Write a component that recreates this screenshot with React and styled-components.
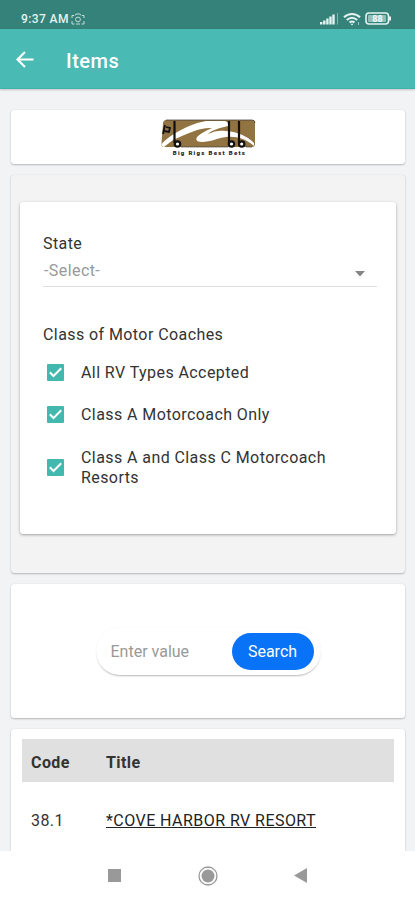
import React from "react"
import styled, { createGlobalStyle } from "styled-components"

const GlobalStyle = createGlobalStyle`
  * {
    box-sizing: border-box;
  }
  body {
    margin: 0;
    background: #f1f3f5;
    color: #333;
    font-family: Roboto, "Liberation Sans", sans-serif;
    font-size: 16px;
    letter-spacing: 0.42px;
  }
`

const Screen = styled.div`
  display: flex;
  flex-direction: column;
  width: 415px;
  height: 900px;
  overflow: hidden;
`

const StatusBar = styled.div`
  display: flex;
  flex: 0 0 29px;
  align-items: center;
  justify-content: space-between;
  padding: 8px 23px 0 21px;
  background-color: #348279;
  color: #e4f3f1;
  font-size: 12px;
  font-weight: 500;
  letter-spacing: 0.4px;
  svg {
    display: block;
  }
`

const StatusGroup = styled.div`
  display: flex;
  align-items: center;
  gap: ${props => props.$gap}px;
`

const TopBar = styled.header`
  display: flex;
  flex: 0 0 60px;
  align-items: center;
  padding: 2px 16px 0;
  background-color: #49bab4;
  border-bottom: 1px solid #3cb5a8;
  box-shadow: 0 1px 2px rgba(0, 0, 0, 0.2);
  h1 {
    margin: 2px 0 0 32px;
    color: #fff;
    font-size: 20px;
    font-weight: 500;
    letter-spacing: 0.5px;
  }
`

const Content = styled.main`
  display: flex;
  flex: 1;
  flex-direction: column;
  min-height: 0;
  padding: 21px 10px 0 11px;
  overflow: hidden;
`

const Card = styled.section`
  flex: 0 0 ${props => props.$height}px;
  margin-bottom: ${props => props.$gap || 11}px;
  background-color: ${props => props.$color || "#fff"};
  border-radius: 3px;
  box-shadow: 0 1px 2px rgba(0, 0, 0, 0.24), 0 0 1px rgba(0, 0, 0, 0.12);
`

const LogoCard = styled(Card)`
  display: flex;
  justify-content: center;
  padding-top: 9px;
`

const FilterCard = styled(Card)`
  padding: 27px 9px 0;
`

const FilterPanel = styled.div`
  height: 332px;
  padding: 32px 19px 0 23px;
  background-color: #fff;
  border-radius: 3px;
  box-shadow: 0 1px 3px rgba(0, 0, 0, 0.34);
`

const Label = styled.div`
  line-height: 20px;
`

const Select = styled.div`
  display: flex;
  align-items: center;
  justify-content: space-between;
  height: 33px;
  margin-bottom: 38px;
  padding: 0 12px 0 1px;
  border-bottom: 1px solid #dedede;
  color: #999;
  svg {
    margin-top: 7px;
  }
`

const Option = styled.div`
  display: flex;
  align-items: center;
  min-height: 42px;
  margin-top: ${props => props.$top || 0}px;
  padding: 0 30px 0 4px;
  line-height: 20px;
  svg {
    flex: 0 0 17px;
    margin: -2px 17px 0 0;
  }
`

const SearchCard = styled(Card)`
  display: flex;
  align-items: flex-start;
  justify-content: center;
  padding-top: 43px;
`

const SearchBox = styled.div`
  display: flex;
  align-items: center;
  justify-content: space-between;
  width: 225px;
  height: 48px;
  padding: 0 7px 0 15px;
  border-radius: 24px;
  color: #999;
  letter-spacing: 0;
  box-shadow: 0 2px 2px -1px rgba(0, 0, 0, 0.28), 0 0 1px rgba(0, 0, 0, 0.08);
`

const SearchButton = styled.button`
  width: 82px;
  height: 37px;
  padding: 0;
  border: 0;
  border-radius: 19px;
  background-color: #0873f7;
  color: #fff;
  font: 400 16px Roboto, sans-serif;
  letter-spacing: 0;
`

const TableCard = styled(Card)`
  padding: 10px 11px 0;
`

const Row = styled.div`
  display: grid;
  grid-template-columns: 75px 1fr;
  align-items: center;
  height: ${props => (props.$head ? 43 : 76)}px;
  padding: ${props => (props.$head ? 3 : 0)}px 0 0 9px;
  background-color: ${props => (props.$head ? "#e0e0e0" : "transparent")};
  font-weight: ${props => (props.$head ? 700 : 400)};
`

const TitleLink = styled.a`
  color: #222;
  letter-spacing: 0.45px;
  text-decoration: underline;
  text-decoration-thickness: 1px;
`

const NavBar = styled.nav`
  display: flex;
  flex: 0 0 49px;
  align-items: center;
  justify-content: space-between;
  padding: 0 108px 0 108px;
  background-color: #fff;
  svg {
    display: block;
  }
`

const CameraIcon = () => (
  <svg width="14" height="12" viewBox="0 0 14 12" fill="none" stroke="#c3ddd9">
    <path d="M4 2.5 5 1h4l1 1.5M1 5V2.5h2M13 5V2.5h-2M1 8v3h2.5M13 8v3h-2.5M5 11h4" />
    <circle cx="7" cy="6.5" r="2.4" />
  </svg>
)

const SignalIcon = () => (
  <svg width="19" height="13" viewBox="0 0 19 13" fill="#e4f3f1">
    <rect x="0" y="10" width="2.4" height="2.5" />
    <rect x="3.1" y="8.5" width="2.4" height="4" />
    <rect x="6.2" y="6.5" width="2.4" height="6" />
    <rect x="9.3" y="4.5" width="2.4" height="8" />
    <rect x="12.3" y="2.5" width="2.4" height="10" />
    <rect x="17" y="1" width="1" height="11.5" opacity="0.45" />
  </svg>
)

const WifiIcon = () => (
  <svg width="18" height="14" viewBox="0 0 18 14" fill="none" stroke="#e4f3f1" strokeWidth="2">
    <path d="M1 5.2C5.5.8 12.5.8 17 5.2M3.800 8C7 5.200 11 5.200 14.200 8M6.500 10.500c1.500-1.300 3.500-1.300 5 0" />
    <path d="M9 13.500 7.500 11.800h3z" fill="#e4f3f1" stroke="none" />
    <path d="M15.500 10v3" strokeWidth="1" opacity="0.6" />
  </svg>
)

const BatteryIcon = () => (
  <svg width="27" height="13" viewBox="0 0 27 13">
    <rect x="1" y="1" width="22.500" height="11" rx="3" fill="none" stroke="#e4f3f1" strokeWidth="1.600" />
    <rect x="3" y="3" width="18" height="7" rx="1" fill="#8fbfb8" />
    <path d="M25 4.500v4" stroke="#e4f3f1" strokeWidth="2" />
    <text x="12.500" y="9.700" fontSize="9" fontWeight="700" letterSpacing="0" textAnchor="middle" fill="#f4fbfa">
      88
    </text>
  </svg>
)

const BackArrow = () => (
  <svg width="18" height="18" viewBox="0 0 18 18" fill="none" stroke="#fff" strokeWidth="2.200">
    <path d="M17.500 8.500H2M9 1 1.500 8.500 9 16" />
  </svg>
)

const BusLogo = () => (
  <svg width="96" height="38" viewBox="0 0 96 38">
    <path d="M6 1h86q3 0 3 3v21q0 3-3 3H4q-3 0-2.500-4L3 4q.5-3 3-3z" fill="#927342" />
    <path
      d="M1.500 25C5 21 9 18 14 15 24 9 34 4 46 2h19q4 1 3 5C60 9 52 11 48 15c6-3 12-4 18-3 12 1 21 5 28 12v3C86 20 77 17 66 18c-9 1-15 5-24 5-6 0-7-3-4-6 3-3 8-5 14-8C41 8 28 14 13 21L4 28Q2 28 1.500 25z"
      fill="#fff"
    />
    <path d="M5 6 3 15M6 8l4 1-1 4-5-1" fill="none" stroke="#111" strokeWidth="1.800" />
    <path d="M14.500 2v22M69 2v22M79 2v22" stroke="#111" strokeWidth="2.200" />
    <path d="M6 1h86q3 0 3 3" fill="none" stroke="#333" strokeWidth="0.700" />
    <path d="M21 28h47M86 28h6" stroke="#333" strokeWidth="0.600" />
    <circle cx="17.500" cy="25" r="2.700" fill="#fff" stroke="#111" strokeWidth="2.200" />
    <circle cx="71.500" cy="25" r="2.700" fill="#fff" stroke="#111" strokeWidth="2.200" />
    <circle cx="81.700" cy="25" r="2.700" fill="#fff" stroke="#111" strokeWidth="2.200" />
    <text x="49.500" y="36" fontSize="6" fontWeight="900" letterSpacing="1.300" textAnchor="middle" fill="#222">
      Big Rigs Best Bets
    </text>
  </svg>
)

const Checkbox = () => (
  <svg width="17" height="17" viewBox="0 0 17 17">
    <rect width="17" height="17" rx="1" fill="#43b8ae" />
    <path d="m2.800 8.300 3.700 3.700L14.200 4.300" fill="none" stroke="#fff" strokeWidth="2" />
  </svg>
)

const options = [
  { text: "All RV Types Accepted", top: 7 },
  { text: "Class A Motorcoach Only" },
  { text: "Class A and Class C Motorcoach Resorts", top: 11 },
]

export default class App extends React.Component {
  render() {
    return (
      <Screen>
        <GlobalStyle />
        <StatusBar>
          <StatusGroup $gap={2}>
            <span>9:37 AM</span>
            <CameraIcon />
          </StatusGroup>
          <StatusGroup $gap={4}>
            <SignalIcon />
            <WifiIcon />
            <BatteryIcon />
          </StatusGroup>
        </StatusBar>
        <TopBar>
          <BackArrow />
          <h1>Items</h1>
        </TopBar>
        <Content>
          <LogoCard $height={54}>
            <BusLogo />
          </LogoCard>
          <FilterCard $height={398} $color="#f3f3f3">
            <FilterPanel>
              <Label>State</Label>
              <Select>
                <span>-Select-</span>
                <svg width="10" height="6" viewBox="0 0 10 6">
                  <path d="M0 0h10L5 5.500z" fill="#858585" />
                </svg>
              </Select>
              <Label>Class of Motor Coaches</Label>
              {options.map(option => (
                <Option key={option.text} $top={option.top}>
                  <Checkbox />
                  <span>{option.text}</span>
                </Option>
              ))}
            </FilterPanel>
          </FilterCard>
          <SearchCard $height={134}>
            <SearchBox>
              <span>Enter value</span>
              <SearchButton>Search</SearchButton>
            </SearchBox>
          </SearchCard>
          <TableCard $height={150}>
            <Row $head>
              <span>Code</span>
              <span>Title</span>
            </Row>
            <Row>
              <span>38.1</span>
              <TitleLink>*COVE HARBOR RV RESORT</TitleLink>
            </Row>
          </TableCard>
        </Content>
        <NavBar>
          <svg width="13" height="13" viewBox="0 0 13 13">
            <rect width="13" height="13" fill="#999" />
          </svg>
          <svg width="20" height="20" viewBox="0 0 20 20">
            <circle cx="10" cy="10" r="9" fill="none" stroke="#999" strokeWidth="1.300" />
            <circle cx="10" cy="10" r="6.500" fill="#999" />
          </svg>
          <svg width="13" height="15" viewBox="0 0 13 15">
            <path d="M13 0v15L0 7.500z" fill="#999" />
          </svg>
        </NavBar>
      </Screen>
    )
  }
}
